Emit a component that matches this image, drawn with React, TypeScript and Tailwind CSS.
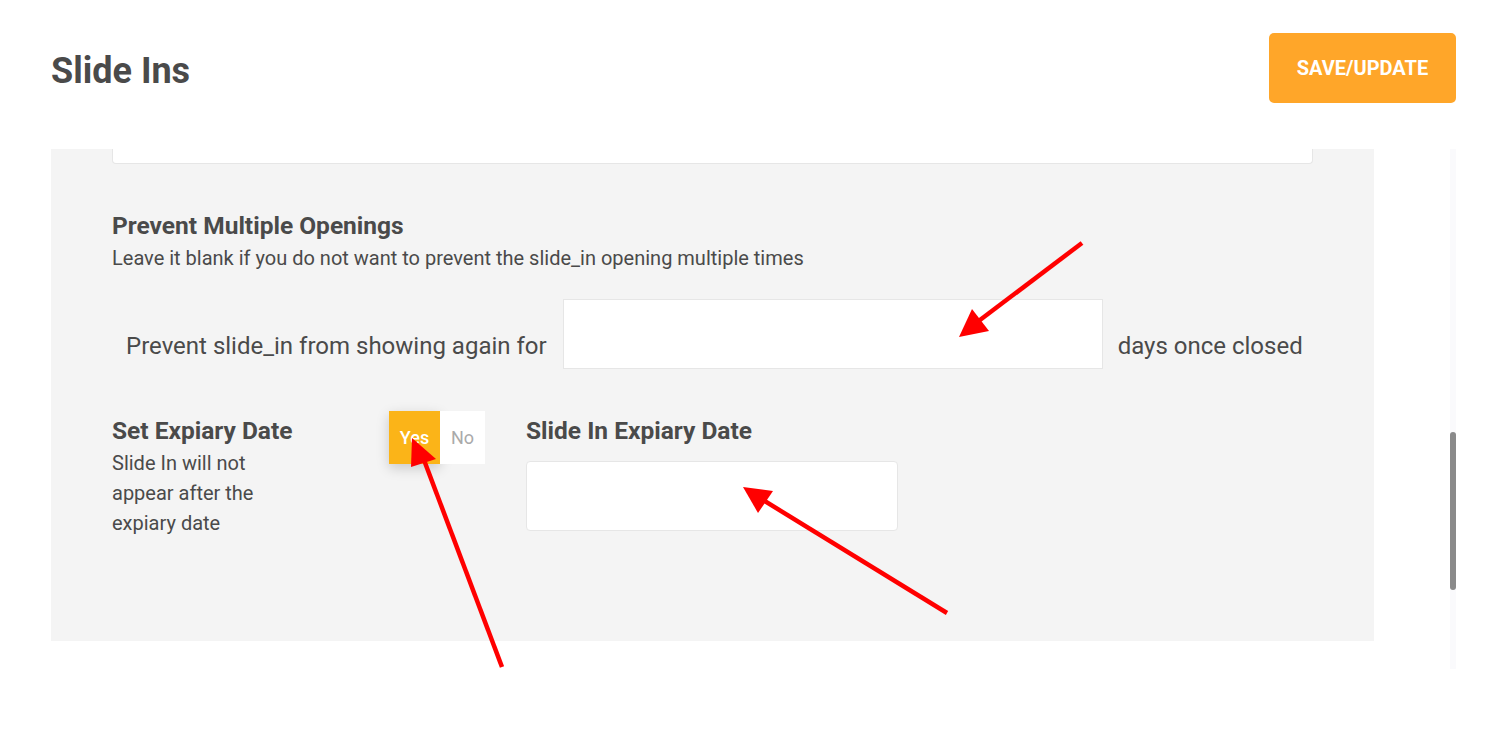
import React from "react";

function Arrows() {
    return (
        <svg className="pointer-events-none absolute inset-0" width="1510" height="744">
            <g stroke="#ff0000" strokeWidth="4.5" fill="#ff0000">
                <line x1="1082" y1="243" x2="976" y2="323" />
                <polygon points="959,337 972,309 989,331" stroke="none" />
                <line x1="502" y1="667" x2="424" y2="460" />
                <polygon points="412,438 411,467 436,459" stroke="none" />
                <line x1="947" y1="613" x2="763" y2="500" />
                <polygon points="743,487 773,491 758,513" stroke="none" />
            </g>
        </svg>
    );
}

export default function App() {
    return (
        <div className="relative h-[744px] w-[1510px] overflow-hidden bg-white font-['Roboto',sans-serif] text-[#4a4a4a]">
            {/* header */}
            <div className="flex items-center justify-between pl-[51px] pr-[54px] pt-[33px]">
                <h1 className="pt-[6px] text-[36px] font-bold leading-[44px]">Slide Ins</h1>
                <button className="h-[70px] w-[187px] rounded-[5px] bg-[#ffa629] text-[20px] font-bold text-white">
                    SAVE/UPDATE
                </button>
            </div>

            <div className="mt-[46px] flex items-start justify-between pr-[54px]">
                {/* panel */}
                <div className="ml-[51px] h-[492px] w-[1323px] bg-[#f4f4f4] px-[61px]">
                    <div className="h-[15px] rounded-b-[4px] border border-t-0 border-[#e6e6e6] bg-white" />

                    <div className="mt-[46px]">
                        <h3 className="text-[24.5px] font-bold leading-[32px]">Prevent Multiple Openings</h3>
                        <p className="text-[20px] leading-[32px]">
                            Leave it blank if you do not want to prevent the slide_in opening multiple times
                        </p>
                    </div>

                    <div className="mt-[25px] flex items-end">
                        <span className="mb-[8px] pl-[14px] pr-[16px] text-[24px] leading-[30px]">
                            Prevent slide_in from showing again for
                        </span>
                        <div className="h-[70px] w-[540px] border border-[#e6e6e6] bg-white" />
                        <span className="mb-[8px] ml-[15px] text-[24px] leading-[30px]">days once closed</span>
                    </div>

                    <div className="mt-[42px] flex items-start">
                        <div className="w-[180px] pt-[5px]">
                            <h3 className="whitespace-nowrap text-[24.5px] font-bold leading-[30px]">Set Expiary Date</h3>
                            <p className="mt-[2px] text-[20px] leading-[30px]">Slide In will not appear after the expiary date</p>
                        </div>
                        <div className="ml-[97px] flex h-[53px] text-[18px]">
                            <div className="flex w-[51px] items-center justify-center bg-[#fbb418] font-medium text-white shadow-[0_4px_12px_rgba(0,0,0,0.18)]">
                                Yes
                            </div>
                            <div className="flex w-[45px] items-center justify-center bg-white text-[#aaaaaa]">No</div>
                        </div>
                        <div className="ml-[41px] pt-[5px]">
                            <h3 className="text-[24.5px] font-bold leading-[30px]">Slide In Expiary Date</h3>
                            <div className="mt-[15px] h-[70px] w-[372px] rounded-[4px] border border-[#e6e6e6] bg-white" />
                        </div>
                    </div>
                </div>

                {/* scrollbar */}
                <div className="h-[520px] w-[6px] bg-[#fafafc] pt-[283px]">
                    <div className="h-[158px] w-[6px] rounded-full bg-[#8a8a8a]" />
                </div>
            </div>

            <Arrows />
        </div>
    );
}
